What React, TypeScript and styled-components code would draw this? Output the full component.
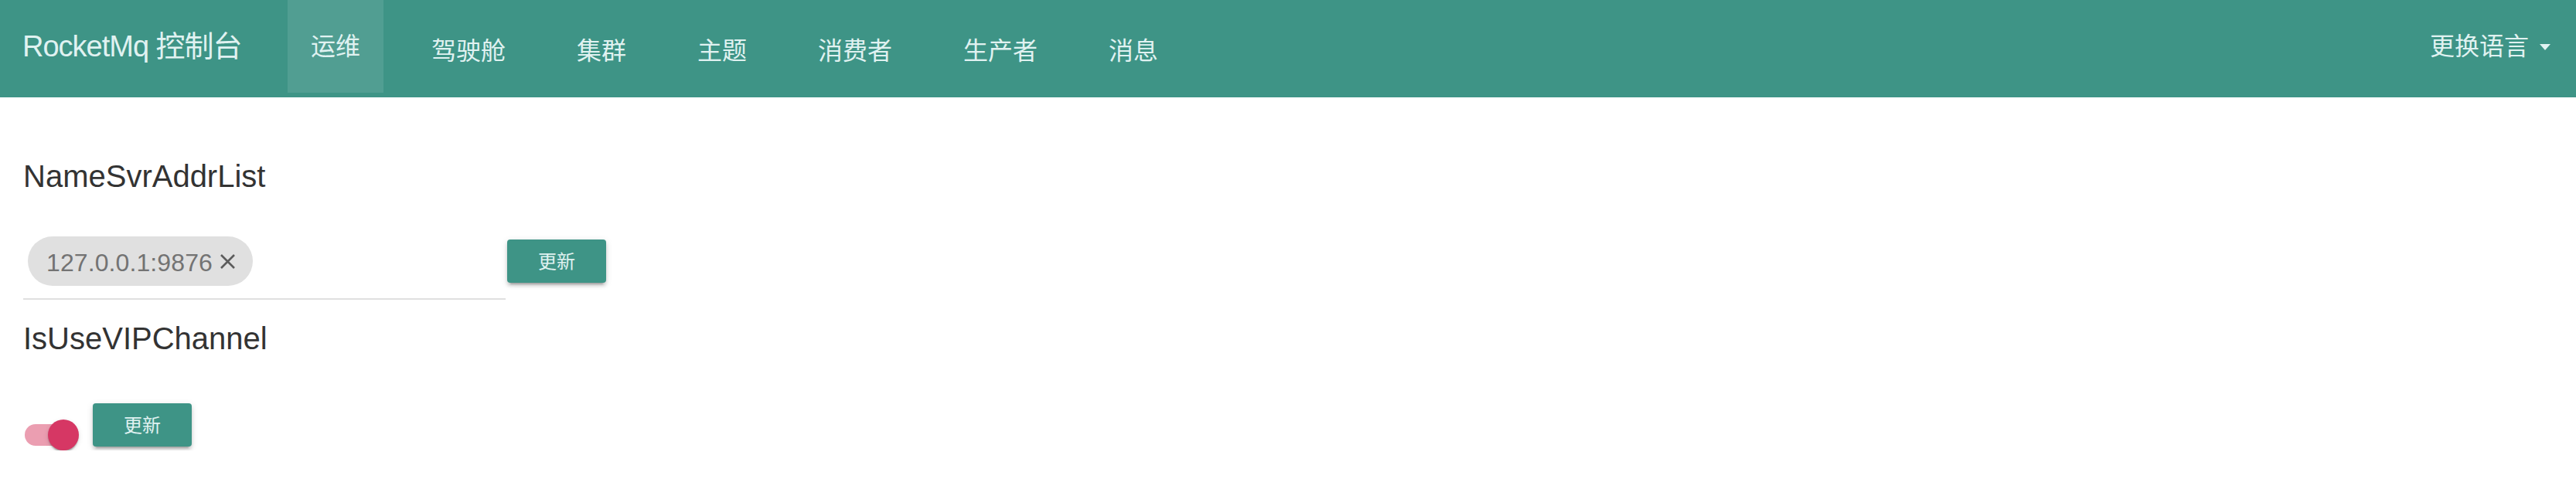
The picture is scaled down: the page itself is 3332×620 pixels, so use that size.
import React, { useState } from "react";
import styled, { createGlobalStyle } from "styled-components";

const TEAL = "#3e9486";
const NAV_TEXT = "#e0f2f1";

const GlobalStyle = createGlobalStyle`
  html, body {
    margin: 0;
    padding: 0;
    background: #fff;
    font-family: "Liberation Sans", "Noto Sans CJK SC", sans-serif;
  }
  * {
    box-sizing: border-box;
  }
`;

const Navbar = styled.header`
  display: flex;
  align-items: flex-start;
  height: 126px;
  background-color: ${TEAL};
  color: ${NAV_TEXT};
`;

const Brand = styled.div`
  display: flex;
  align-items: center;
  flex: 0 0 372px;
  height: 120px;
  padding-left: 29px;
  font-size: 38px;
  line-height: 46px;
  letter-spacing: -1px;
  white-space: nowrap;
`;

const NavList = styled.nav`
  display: flex;
  gap: 32px;
`;

const NavLink = styled.a<{ $active?: boolean }>`
  display: flex;
  align-items: center;
  height: 120px;
  padding: ${(p) => (p.$active ? "0 30px 6px" : "6px 30px 0")};
  font-family: "Noto Sans CJK SC", sans-serif;
  font-size: 32px;
  line-height: 32px;
  color: ${NAV_TEXT};
  text-decoration: none;
  white-space: nowrap;
  cursor: pointer;
  background-color: ${(p) => (p.$active ? "rgba(255, 255, 255, 0.1)" : "transparent")};
`;

const Spacer = styled.div`
  flex: 1;
`;

const LangMenu = styled.div`
  display: flex;
  align-items: center;
  gap: 14px;
  height: 120px;
  padding: 0 33px 6px 0;
  font-family: "Noto Sans CJK SC", sans-serif;
  font-size: 32px;
  line-height: 32px;
  cursor: pointer;
`;

const Caret = styled.span`
  width: 0;
  height: 0;
  margin-top: 8px;
  border-top: 8px solid ${NAV_TEXT};
  border-left: 7.5px solid transparent;
  border-right: 7.5px solid transparent;
`;

const Main = styled.main`
  padding: 79px 30px 0;
  color: #333;
`;

const Label = styled.div<{ $gap?: number }>`
  margin-top: ${(p) => p.$gap ?? 0}px;
  font-size: 40px;
  line-height: 46px;
`;

const Row = styled.div<{ $gap: number }>`
  display: flex;
  align-items: flex-start;
  margin-top: ${(p) => p.$gap}px;
`;

const ChipField = styled.div`
  display: flex;
  width: 624px;
  padding: 0 0 16px 6px;
  border-bottom: 2px solid #e0e0e0;
`;

const Chip = styled.div`
  display: flex;
  align-items: center;
  gap: 9px;
  height: 64px;
  padding: 0 22px 0 24px;
  border-radius: 32px;
  background-color: #e0e0e0;
  color: #737373;
`;

const ChipText = styled.span`
  padding-top: 3px;
  font-size: 32px;
  line-height: 32px;
  letter-spacing: 0.1px;
`;

const RemoveIcon = styled.svg`
  display: block;
  cursor: pointer;
`;

const Button = styled.button<{ $offset: number; $top?: number }>`
  display: flex;
  align-items: center;
  justify-content: center;
  width: 128px;
  height: 56px;
  margin-left: ${(p) => p.$offset}px;
  margin-top: ${(p) => p.$top ?? 0}px;
  padding: 0 0 2px;
  border: none;
  border-radius: 4px;
  background-color: ${TEAL};
  color: ${NAV_TEXT};
  font-family: "Noto Sans CJK SC", sans-serif;
  font-size: 24px;
  line-height: 24px;
  cursor: pointer;
  box-shadow: 0 6px 2px -4px rgba(0, 0, 0, 0.2), 0 4px 4px 0 rgba(0, 0, 0, 0.14),
    0 2px 10px 0 rgba(0, 0, 0, 0.12);
`;

const Toggle = styled.div`
  position: relative;
  width: 72px;
  height: 40px;
  margin-top: 21px;
  cursor: pointer;
`;

const ToggleTrack = styled.div<{ $on: boolean }>`
  width: 68px;
  height: 28px;
  margin: 6px 0 0 2px;
  border-radius: 14px;
  background-color: ${(p) => (p.$on ? "#eb9eb1" : "#bdbdbd")};
`;

const ToggleThumb = styled.div<{ $on: boolean }>`
  position: absolute;
  top: 0;
  left: ${(p) => (p.$on ? "32px" : "0")};
  width: 40px;
  height: 40px;
  border-radius: 50%;
  background-color: ${(p) => (p.$on ? "#d63764" : "#fafafa")};
  box-shadow: 0 4px 2px -2px rgba(0, 0, 0, 0.2), 0 2px 2px 0 rgba(0, 0, 0, 0.14),
    0 2px 6px 0 rgba(0, 0, 0, 0.12);
`;

const navItems = ["运维", "驾驶舱", "集群", "主题", "消费者", "生产者", "消息"];

export default function App() {
  const [active, setActive] = useState("运维");
  const [servers, setServers] = useState(["127.0.0.1:9876"]);
  const [vip, setVip] = useState(true);

  return (
    <>
      <GlobalStyle />
      <Navbar>
        <Brand>RocketMq 控制台</Brand>
        <NavList>
          {navItems.map((item) => (
            <NavLink key={item} $active={item === active} onClick={() => setActive(item)}>
              {item}
            </NavLink>
          ))}
        </NavList>
        <Spacer />
        <LangMenu>
          更换语言
          <Caret />
        </LangMenu>
      </Navbar>

      <Main>
        <Label>NameSvrAddrList</Label>
        <Row $gap={55}>
          <ChipField>
            {servers.map((addr) => (
              <Chip key={addr}>
                <ChipText>{addr}</ChipText>
                <RemoveIcon
                  width="21"
                  height="19"
                  viewBox="0 0 21 19"
                  onClick={() => setServers(servers.filter((s) => s !== addr))}
                >
                  <path d="M2 1 L19 18 M19 1 L2 18" stroke="#5c5c5c" strokeWidth="2.6" fill="none" />
                </RemoveIcon>
              </Chip>
            ))}
          </ChipField>
          <Button $offset={2} $top={4}>
            更新
          </Button>
        </Row>

        <Label $gap={27}>IsUseVIPChannel</Label>
        <Row $gap={61}>
          <Toggle onClick={() => setVip(!vip)}>
            <ToggleTrack $on={vip} />
            <ToggleThumb $on={vip} />
          </Toggle>
          <Button $offset={18}>更新</Button>
        </Row>
      </Main>
    </>
  );
}
